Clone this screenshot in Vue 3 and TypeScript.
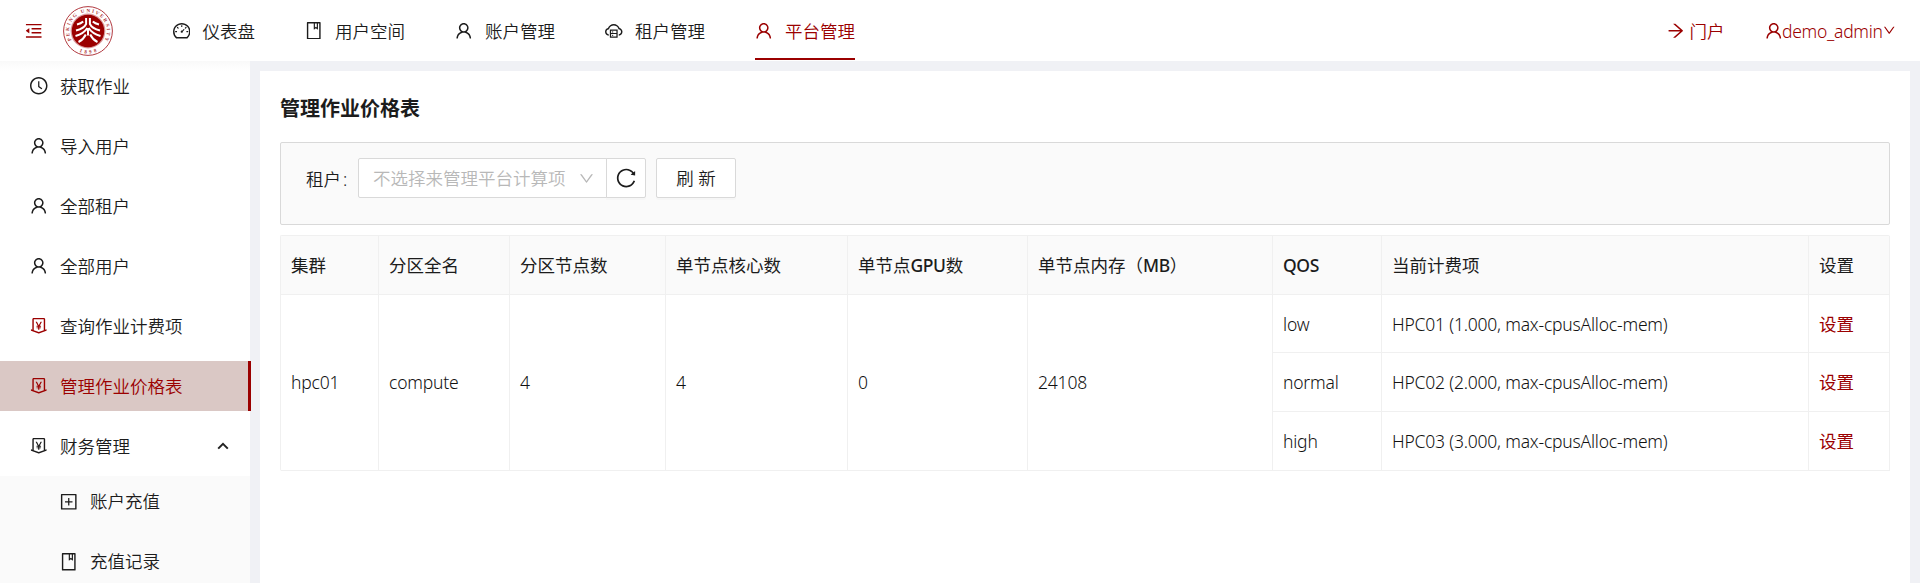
<script setup lang="ts">
type IconName =
  | 'fold' | 'dashboard' | 'book' | 'user' | 'cloud' | 'arrow'
  | 'down' | 'clock' | 'money' | 'plus' | 'reload'

const icons: Record<IconName, string> = {
  fold: 'M408 442h480c4.4 0 8-3.6 8-8v-56c0-4.4-3.6-8-8-8H408c-4.4 0-8 3.6-8 8v56c0 4.4 3.6 8 8 8zm-8 204c0 4.4 3.6 8 8 8h480c4.4 0 8-3.6 8-8v-56c0-4.4-3.6-8-8-8H408c-4.4 0-8 3.6-8 8v56zm504-486H120c-4.4 0-8 3.6-8 8v56c0 4.4 3.6 8 8 8h784c4.4 0 8-3.6 8-8v-56c0-4.4-3.6-8-8-8zm0 632H120c-4.4 0-8 3.6-8 8v56c0 4.4 3.6 8 8 8h784c4.4 0 8-3.6 8-8v-56c0-4.4-3.6-8-8-8zM115.4 518.9L271.7 642c5.8 4.6 14.4.5 14.4-6.9V388.9c0-7.4-8.5-11.5-14.4-6.9L115.4 505.1a8.74 8.74 0 000 13.8z',
  dashboard: 'M924.8 385.6a446.7 446.7 0 00-96-142.4 446.7 446.7 0 00-142.4-96C631.1 123.8 572.5 112 512 112s-119.1 11.8-174.4 35.2a446.7 446.7 0 00-142.4 96 446.7 446.7 0 00-96 142.4C75.8 440.9 64 499.5 64 560c0 132.7 58.3 257.7 159.9 343.1l1.7 1.4c5.8 4.8 13.1 7.5 20.6 7.5h531.7c7.5 0 14.8-2.7 20.6-7.5l1.7-1.4C901.7 817.7 960 692.7 960 560c0-60.5-11.9-119.1-35.2-174.4zM761.4 836H262.6A371.12 371.12 0 01140 560c0-99.4 38.7-192.8 109-263 70.3-70.3 163.7-109 263-109 99.4 0 192.8 38.7 263 109 70.3 70.3 109 163.7 109 263 0 105.6-44.5 205.5-122.6 276zM623.5 421.5a8.03 8.03 0 00-11.3 0L527.7 506c-18.7-5-39.4-.2-54.1 14.5a55.95 55.95 0 000 79.2 55.95 55.95 0 0079.2 0 55.87 55.87 0 0014.5-54.1l84.5-84.5c3.1-3.1 3.1-8.2 0-11.3l-28.3-28.3zM490 320h44c4.4 0 8-3.6 8-8v-80c0-4.4-3.6-8-8-8h-44c-4.4 0-8 3.6-8 8v80c0 4.4 3.6 8 8 8zm260 218v44c0 4.4 3.6 8 8 8h80c4.4 0 8-3.6 8-8v-44c0-4.4-3.6-8-8-8h-80c-4.4 0-8 3.6-8 8zm12.7-197.2l-31.1-31.1a8.03 8.03 0 00-11.3 0l-56.6 56.6a8.03 8.03 0 000 11.3l31.1 31.1c3.1 3.1 8.2 3.1 11.3 0l56.6-56.6c3.1-3.1 3.1-8.2 0-11.3zm-458.6-31.1a8.03 8.03 0 00-11.3 0l-31.1 31.1a8.03 8.03 0 000 11.3l56.6 56.6c3.1 3.1 8.2 3.1 11.3 0l31.1-31.1c3.1-3.1 3.1-8.2 0-11.3l-56.6-56.6zM262 530h-80c-4.4 0-8 3.6-8 8v44c0 4.4 3.6 8 8 8h80c4.4 0 8-3.6 8-8v-44c0-4.4-3.6-8-8-8z',
  book: 'M832 64H192c-17.7 0-32 14.3-32 32v832c0 17.7 14.3 32 32 32h640c17.7 0 32-14.3 32-32V96c0-17.7-14.3-32-32-32zm-260 72h96v209.9L621.5 312 572 347.4V136zm220 752H232V136h280v296.9c0 3.3 1 6.6 3 9.3a15.9 15.9 0 0022.3 3.7l83.8-59.9 81.4 59.4c2.7 2 6 3.1 9.4 3.1 8.8 0 16-7.2 16-16V136h64v752z',
  user: 'M858.5 763.6a374 374 0 00-80.6-119.5 375.63 375.63 0 00-119.5-80.6c-.4-.2-.8-.3-1.2-.5C719.5 518 760 444.7 760 362c0-137-111-248-248-248S264 225 264 362c0 82.7 40.5 156 102.8 201.1-.4.2-.8.3-1.2.5-44.8 18.9-85 46-119.5 80.6a375.63 375.63 0 00-80.6 119.5A371.7 371.7 0 00136 901.8a8 8 0 008 8.2h60c4.4 0 7.9-3.5 8-7.8 2-77.2 33-149.5 87.8-204.3 56.7-56.7 132-87.9 212.2-87.9s155.5 31.2 212.2 87.9C779 752.7 810 825 812 902.2c.1 4.4 3.6 7.8 8 7.8h60a8 8 0 008-8.2c-1-47.8-10.9-94.3-29.5-138.2zM512 534c-45.9 0-89.1-17.9-121.6-50.4S340 407.9 340 362c0-45.9 17.9-89.1 50.4-121.6S466.1 190 512 190s89.1 17.9 121.6 50.4S684 316.1 684 362c0 45.9-17.9 89.1-50.4 121.6S557.9 534 512 534z',
  cloud: 'M704 446H320c-4.4 0-8 3.6-8 8v402c0 4.4 3.6 8 8 8h384c4.4 0 8-3.6 8-8V454c0-4.4-3.6-8-8-8zm-328 64h272v117H376V510zm272 290H376V683h272v117zM424 748a32 32 0 1064 0 32 32 0 10-64 0zm0-178a32 32 0 1064 0 32 32 0 10-64 0zM811.4 368.9C765.6 248 648.9 162 512.2 162S258.8 247.9 213 368.8C126.9 391.5 63.5 470.2 64 563.6 64.6 668 145.6 752.9 247.6 762c4.7.4 8.7-3.3 8.7-8v-60.4c0-4-3-7.4-7-7.9-27-3.4-52.5-15.2-72.1-34.5-24-23.5-37.2-55.1-37.2-88.6 0-28 9.1-54.4 26.2-76.4 16.7-21.4 40.2-36.9 66.1-43.7l37.9-10 13.9-36.7c8.6-22.8 20.6-44.2 35.7-63.5 14.9-19.2 32.6-36 52.4-50 41.1-28.9 89.5-44.2 140-44.2s98.9 15.3 140 44.3c19.9 14 37.5 30.8 52.4 50 15.1 19.3 27.1 40.7 35.7 63.5l13.8 36.6 37.8 10c54.2 14.4 92.1 63.7 92.1 120 0 33.6-13.2 65.1-37.2 88.6-19.5 19.2-44.9 31.1-71.9 34.5-4 .5-6.9 3.9-6.9 7.9V754c0 4.7 4.1 8.4 8.8 8 101.7-9.2 182.5-94 183.2-198.2.6-93.4-62.7-172.1-148.6-194.9z',
  arrow: 'M869 487.8L491.2 159.9c-2.9-2.5-6.6-3.9-10.5-3.9h-88.5c-7.4 0-10.8 9.2-5.2 14l350.2 304H152c-4.4 0-8 3.6-8 8v60c0 4.4 3.6 8 8 8h585.1L386.9 854c-5.6 4.9-2.2 14 5.2 14h91.5c1.9 0 3.8-.7 5.2-2L869 536.2a32.07 32.07 0 000-48.4z',
  down: 'M884 256h-75c-5.1 0-9.9 2.5-12.9 6.6L512 654.2 227.9 262.6c-3-4.1-7.8-6.6-12.9-6.6h-75c-6.5 0-10.3 7.4-6.5 12.7l352.6 486.1c12.8 17.6 39 17.6 51.7 0l352.6-486.1c3.9-5.3.1-12.7-6.4-12.7z',
  clock: 'M512 64C264.6 64 64 264.6 64 512s200.6 448 448 448 448-200.6 448-448S759.4 64 512 64zm0 820c-205.4 0-372-166.6-372-372s166.6-372 372-372 372 166.6 372 372-166.6 372-372 372zM686.7 638.6L544.1 535.5V288c0-4.4-3.6-8-8-8H488c-4.4 0-8 3.6-8 8v275.4c0 2.6 1.2 5 3.3 6.5l165.4 120.6c3.6 2.6 8.6 1.8 11.2-1.7l28.6-39c2.6-3.7 1.8-8.7-1.8-11.2z',
  money: 'M911.5 700.7a8 8 0 00-10.3-4.8L840 718.2V180c0-37.6-30.4-68-68-68H252c-37.6 0-68 30.4-68 68v538.2l-61.3-22.3c-.9-.3-1.8-.5-2.7-.5-4.4 0-8 3.6-8 8V763c0 3.3 2.1 6.3 5.3 7.5L501 910.1c7.1 2.6 14.8 2.6 21.9 0l383.8-139.5c3.2-1.2 5.3-4.2 5.3-7.5v-59.6c0-1-.2-1.9-.5-2.8zM512 837.5l-256-93.1V184h512v560.4l-256 93.1zM660.6 312h-54.5c-3 0-5.8 1.7-7.1 4.4l-84.7 168.8H511l-84.7-168.8a8 8 0 00-7.1-4.4h-55.7c-1.3 0-2.6.3-3.8 1-3.9 2.1-5.3 7-3.2 10.8l103.9 191.6h-57c-4.4 0-8 3.6-8 8v27.1c0 4.4 3.6 8 8 8h76v39h-76c-4.4 0-8 3.6-8 8v27.1c0 4.4 3.6 8 8 8h76V704c0 4.4 3.6 8 8 8h49.9c4.4 0 8-3.6 8-8v-63.5h76.3c4.4 0 8-3.6 8-8v-27.1c0-4.4-3.6-8-8-8h-76.3v-39h76.3c4.4 0 8-3.6 8-8v-27.1c0-4.4-3.6-8-8-8H564l103.7-191.6c.6-1.2 1-2.5 1-3.8-.1-4.3-3.7-7.9-8.1-7.9z',
  plus: 'M328 544h152v152c0 4.4 3.6 8 8 8h48c4.4 0 8-3.6 8-8V544h152c4.4 0 8-3.6 8-8v-48c0-4.4-3.6-8-8-8H544V328c0-4.4-3.6-8-8-8h-48c-4.4 0-8 3.6-8 8v152H328c-4.4 0-8 3.6-8 8v48c0 4.4 3.6 8 8 8zM880 112H144c-17.7 0-32 14.3-32 32v736c0 17.7 14.3 32 32 32h736c17.7 0 32-14.3 32-32V144c0-17.7-14.3-32-32-32zm-40 728H184V184h656v656z',
  reload: 'M909.1 209.3l-56.4 44.1C775.8 155.1 656.2 92 521.9 92 290 92 102.3 279.5 102 511.5 101.7 743.7 289.8 932 521.9 932c181.3 0 335.8-115 394.6-276.1 1.5-4.2-.7-8.9-4.9-10.3l-56.7-19.5a8 8 0 00-10.1 4.8c-1.8 5-3.8 10-5.9 14.9-17.3 41-42.1 77.8-73.7 109.4A344.77 344.77 0 01655.9 829c-42.3 17.9-87.4 27-133.8 27-46.5 0-91.5-9.1-133.8-27A341.5 341.5 0 01279 755.2a342.16 342.16 0 01-73.7-109.4c-17.9-42.4-27-87.4-27-133.9s9.1-91.5 27-133.9c17.3-41 42.1-77.8 73.7-109.4 31.6-31.6 68.4-56.4 109.3-73.8 42.3-17.9 87.4-27 133.8-27 46.5 0 91.5 9.1 133.8 27a341.5 341.5 0 01109.3 73.8c9.9 9.9 19.2 20.4 27.8 31.4l-60.2 47a8 8 0 003 14.1l175.6 43c5 1.2 9.9-2.6 9.9-7.7l.8-180.9c-.1-6.6-7.8-10.3-13-6.2z',
}

interface NavItem { icon: IconName; label: string; active?: boolean; redIcon?: boolean; open?: boolean }

const navItems: NavItem[] = [
  { icon: 'dashboard', label: '仪表盘' },
  { icon: 'book', label: '用户空间' },
  { icon: 'user', label: '账户管理' },
  { icon: 'cloud', label: '租户管理' },
  { icon: 'user', label: '平台管理', active: true },
]

const sideItems: NavItem[] = [
  { icon: 'clock', label: '获取作业' },
  { icon: 'user', label: '导入用户' },
  { icon: 'user', label: '全部租户' },
  { icon: 'user', label: '全部用户' },
  { icon: 'money', label: '查询作业计费项', redIcon: true },
  { icon: 'money', label: '管理作业价格表', active: true },
  { icon: 'money', label: '财务管理', open: true },
]

const subItems: NavItem[] = [
  { icon: 'plus', label: '账户充值' },
  { icon: 'book', label: '充值记录' },
]

const columns: string[] = ['集群', '分区全名', '分区节点数', '单节点核心数', '单节点GPU数', '单节点内存（MB）', 'QOS', '当前计费项', '设置']
const partition: string[] = ['hpc01', 'compute', '4', '4', '0', '24108']
const prices = [
  { qos: 'low', item: 'HPC01 (1.000, max-cpusAlloc-mem)' },
  { qos: 'normal', item: 'HPC02 (2.000, max-cpusAlloc-mem)' },
  { qos: 'high', item: 'HPC03 (3.000, max-cpusAlloc-mem)' },
]

// Splits a heading into runs so that Latin abbreviations can be set heavier.
const runs = (s: string): string[] => s.split(/([A-Z]+)/).filter(Boolean)
const isLatin = (s: string): boolean => /^[A-Z]+$/.test(s)
</script>

<template>
  <div class="app">
    <header class="header">
      <svg class="icon fold" viewBox="64 64 896 896"><path :d="icons.fold" /></svg>
      <svg class="logo" viewBox="-25 -25 50 50">
        <defs>
          <path id="ring-top" d="M-15.2 11.3A18.9 18.9 0 1 1 15.2 11.3" />
          <path id="ring-bottom" d="M-14 17.6A22.5 22.5 0 0 0 14 17.6" />
        </defs>
        <circle class="ring" r="24.4" />
        <circle class="halo" r="17.4" />
        <circle class="disc" r="16.2" />
        <text class="ring-text"><textPath href="#ring-top" startOffset="50%" textLength="78">PEKING UNIVERSITY</textPath></text>
        <text class="ring-text"><textPath href="#ring-bottom" startOffset="50%" textLength="18">1898</textPath></text>
        <g class="emblem">
          <path d="M-1.9 -13V-7Q-4 -2.5 -12 -.5M-4.8 -9.5Q-7 -7.5 -11 -6.5M-.6 -3Q-4 2.5 -12.5 5M-2.2 3.5Q-4.5 8.5 -9.5 11" />
          <path d="M1.9 -13V-7Q4 -2.5 12 -.5M4.8 -9.5Q7 -7.5 11 -6.5M.6 -3Q4 2.5 12.5 5M2.2 3.5Q4.5 8.5 9.5 11" />
          <path d="M0 -3V4.5" />
        </g>
      </svg>
      <nav class="nav">
        <a v-for="n in navItems" :key="n.label" class="nav-item" :class="{ active: n.active }">
          <svg class="icon" viewBox="64 64 896 896"><path :d="icons[n.icon]" /></svg>
          <span class="text">{{ n.label }}</span>
        </a>
      </nav>
      <div class="account">
        <a class="portal">
          <svg class="icon" viewBox="64 64 896 896"><path :d="icons.arrow" /></svg>
          <span class="text">门户</span>
        </a>
        <a class="profile">
          <svg class="icon" viewBox="64 64 896 896"><path :d="icons.user" /></svg>
          <span class="text username">demo_admin</span>
          <svg class="icon caret" viewBox="64 64 896 896"><path :d="icons.down" /></svg>
        </a>
      </div>
    </header>

    <div class="body">
      <aside class="sider">
        <a
          v-for="s in sideItems"
          :key="s.label"
          class="side-item"
          :class="{ active: s.active, 'red-icon': s.redIcon }"
        >
          <svg class="icon" viewBox="64 64 896 896"><path :d="icons[s.icon]" /></svg>
          <span class="text">{{ s.label }}</span>
          <svg v-if="s.open" class="expand" viewBox="0 0 12 8"><path d="M1.2 6.6L6 1.8L10.8 6.6" /></svg>
        </a>
        <div class="submenu">
          <a v-for="s in subItems" :key="s.label" class="side-item sub">
            <svg class="icon" viewBox="64 64 896 896"><path :d="icons[s.icon]" /></svg>
            <span>{{ s.label }}</span>
          </a>
        </div>
      </aside>

      <main class="content">
        <h1 class="title">管理作业价格表</h1>
        <form class="filter" @submit.prevent>
          <span class="label">租户<span class="colon">:</span></span>
          <div class="select">
            <span class="text">不选择来管理平台计算项</span>
            <svg class="icon caret" viewBox="64 64 896 896"><path :d="icons.down" /></svg>
          </div>
          <button class="reload" type="button">
            <svg class="icon" viewBox="64 64 896 896"><path :d="icons.reload" /></svg>
          </button>
          <button class="refresh" type="button">刷 新</button>
        </form>

        <table class="table">
          <colgroup>
            <col v-for="(c, i) in columns" :key="c" :class="'c' + i" />
          </colgroup>
          <thead>
            <tr>
              <th v-for="c in columns" :key="c"><span v-for="r in runs(c)" :key="r" :class="{ latin: isLatin(r) }">{{ r }}</span></th>
            </tr>
          </thead>
          <tbody>
            <tr v-for="(p, i) in prices" :key="p.qos">
              <template v-if="i === 0">
                <td v-for="(v, k) in partition" :key="k" class="merged" rowspan="3">{{ v }}</td>
              </template>
              <td>{{ p.qos }}</td>
              <td>{{ p.item }}</td>
              <td><a class="link">设置</a></td>
            </tr>
          </tbody>
        </table>
      </main>
    </div>
  </div>
</template>

<style>
body { margin: 0; overflow: hidden; }
</style>

<style scoped>
.app {
  height: 583px;
  display: flex;
  flex-direction: column;
  overflow: hidden;
  background: #f0f1f5;
  color: #1c1c1c;
  font: 350 17.5px/27.5px "Noto Sans", "Noto Sans CJK SC", sans-serif;
  box-sizing: border-box;
}
.app * { box-sizing: border-box; }
.icon { width: 17.5px; height: 17.5px; fill: currentColor; flex: none; display: block; }
.text { padding-top: 2px; }

.header {
  flex: none;
  height: 61px;
  display: flex;
  align-items: center;
  padding: 0 25px;
  background: #fff;
}
.fold { color: #9b0000; }
.logo { width: 50px; height: 50px; margin-left: 20.5px; flex: none; }
.ring { fill: #fff; stroke: #a8232a; stroke-width: 0.9; }
.halo { fill: #d99a9c; }
.disc { fill: #9b0000; }
.ring-text { fill: #b0353a; font: 700 5px "Liberation Serif", serif; text-anchor: middle; }
.emblem { fill: none; stroke: #fff; stroke-width: 2; }
.nav { display: flex; gap: 50px; margin-left: 59.5px; height: 61px; }
.nav-item { display: flex; align-items: center; gap: 12.5px; height: 60px; padding-top: 3px; border-bottom: 2px solid transparent; }
.nav-item.active { color: #9b0000; border-bottom-color: #9b0000; }
.account { margin-left: auto; display: flex; align-items: center; gap: 40px; color: #9b0000; }
.portal, .profile { display: flex; align-items: center; }
.portal { gap: 5px; }
.profile .caret { width: 12.5px; height: 12.5px; }
.username { width: 100.5px; letter-spacing: -0.28px; white-space: nowrap; }

.body { flex: 1; min-height: 0; display: flex; }
.sider {
  width: 250px;
  flex: none;
  background: linear-gradient(#f9f9f9, #fff 10px);
}
.side-item {
  display: flex;
  align-items: center;
  gap: 12.5px;
  height: 50px;
  margin-bottom: 10px;
  padding-left: 30px;
}
.side-item.active { width: 251px; color: #9b0000; background: #dac8c5; border-right: 3px solid #9b0000; }
.red-icon .icon { color: #9b0000; }
.expand { width: 12px; height: 8px; margin: 0 21px 0 auto; fill: none; stroke: #222; stroke-width: 2; }
.submenu { margin-top: -5px; padding-top: 1px; background: #fafafa; }
.side-item.sub { padding-left: 60px; }

.content { width: 1650px; margin: 10px 0 0 10px; padding: 20px; background: #fff; }
.title { margin: 4px 0 19px; font-size: 20px; line-height: 28px; font-weight: 700; }
.filter {
  height: 83px;
  width: 1610px;
  display: flex;
  align-items: flex-start;
  padding: 15px 25px;
  background: #fafafa;
  border: 1px solid #d9d9d9;
  border-radius: 2px;
}
.label { width: 52px; line-height: 42px; }
.colon { margin-left: 2px; }
.select {
  width: 249px;
  height: 40px;
  display: flex;
  align-items: center;
  justify-content: space-between;
  padding: 0 12px 0 14px;
  border: 1px solid #d9d9d9;
  border-radius: 2px 0 0 2px;
  background: #fff;
  color: #b8b8b8;
}
.select .caret { width: 15px; height: 15px; }
.reload, .refresh {
  height: 40px;
  padding: 2px 0 0;
  border: 1px solid #d9d9d9;
  border-radius: 2px;
  background: #fff;
  color: inherit;
  font: inherit;
  box-shadow: 0 2px 0 rgba(0, 0, 0, 0.015);
}
.reload { width: 40px; margin-left: -1px; padding: 0 0 0 9px; border-radius: 0 2px 2px 0; }
.reload .icon { width: 20px; height: 20px; }
.refresh { width: 80px; margin-left: 10px; }

.table {
  width: 1610px;
  margin-top: 10px;
  table-layout: fixed;
  border-collapse: separate;
  border-spacing: 0;
  border: 1px solid #f0f0f0;
  border-width: 1px 0 0 1px;
  border-radius: 2px;
}
.c0 { width: 98px; }
.c1 { width: 131px; }
.c2 { width: 156px; }
.c3 { width: 182px; }
.c4 { width: 180px; }
.c5 { width: 245px; }
.c6 { width: 109px; }
.c7 { width: 427px; }
.c8 { width: 81px; }
.table th, .table td {
  height: 58.6px;
  padding: 2px 10px 0;
  border: 1px solid #f0f0f0;
  border-width: 0 1px 1px 0;
  text-align: left;
  vertical-align: middle;
  white-space: nowrap;
}
.table tr:last-child td { height: 59.2px; }
.table th { background: #fafafa; font-weight: 400; }
.table td { letter-spacing: -0.2px; color: #111; }
.table td.merged { padding-top: 1px; }
.table .latin { font-weight: 500; letter-spacing: -0.4px; }
.table .link { color: #9b0000; font-weight: 400; letter-spacing: 0; }
</style>
